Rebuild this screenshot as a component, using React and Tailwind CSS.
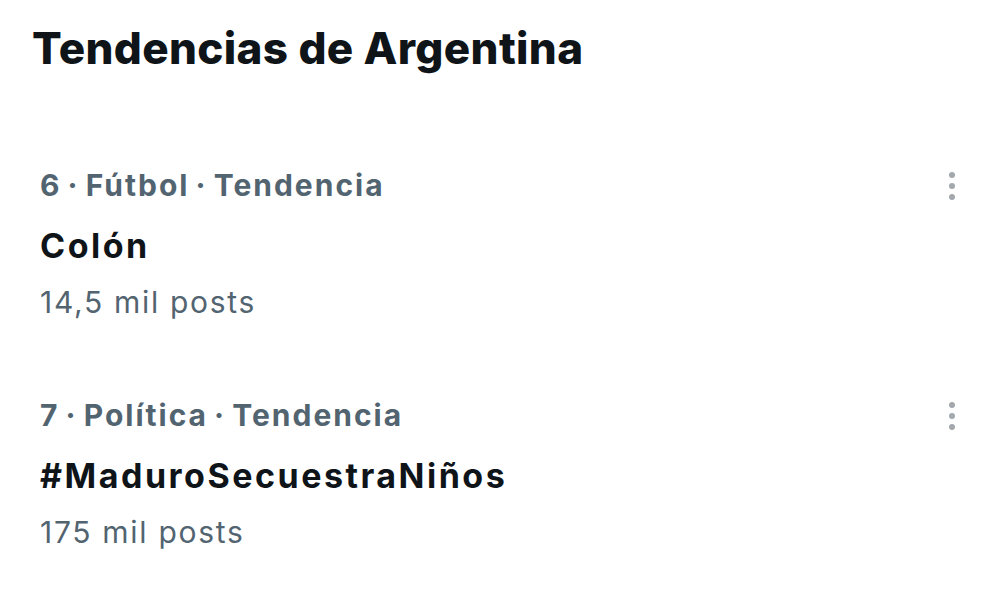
import React from 'react';

const trends = [
  { rank: 6, category: 'Fútbol', name: 'Colón', posts: '14,5 mil posts' },
  { rank: 7, category: 'Política', name: '#MaduroSecuestraNiños', posts: '175 mil posts' },
];

function MoreIcon() {
  return (
    <svg width="8" height="30" viewBox="0 0 8 30" fill="#a3a8ad">
      <circle cx="4" cy="4" r="3" />
      <circle cx="4" cy="15" r="3" />
      <circle cx="4" cy="26" r="3" />
    </svg>
  );
}

export default function App() {
  return (
    <div
      className="w-[1000px] h-[610px] bg-white overflow-hidden"
      style={{ fontFamily: 'Inter, "Liberation Sans", sans-serif' }}
    >
      <h1 className="pl-[32px] pt-[20px] text-[44px] leading-[56px] font-extrabold text-[#0f1419] tracking-[0.35px]">
        Tendencias de Argentina
      </h1>

      <div className="mt-[89px] flex flex-col gap-[73px]">
        {trends.map((t) => (
          <div key={t.rank} className="flex pl-[40px] pr-[44px]">
            <div className="flex-1">
              <div className="text-[30px] leading-[40px] font-bold text-[#536471] tracking-[2px] [word-spacing:-3px]">
                {t.rank} · {t.category} · Tendencia
              </div>
              <div className="mt-[19px] text-[34px] leading-[44px] font-bold text-[#0f1419] tracking-[2.5px]">
                {t.name}
              </div>
              <div className="mt-[14px] text-[30px] leading-[40px] text-[#536471] tracking-[1.7px]">
                {t.posts}
              </div>
            </div>
            <div className="pt-[6px]">
              <MoreIcon />
            </div>
          </div>
        ))}
      </div>
    </div>
  );
}
